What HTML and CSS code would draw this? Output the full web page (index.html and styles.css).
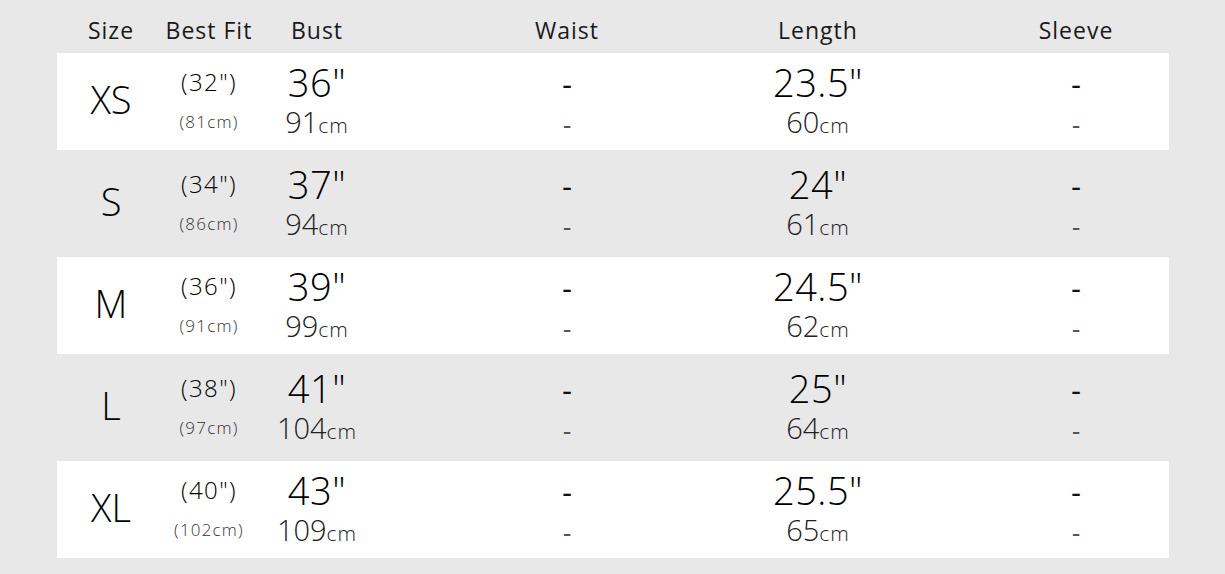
FILE: index.html
```html
<!DOCTYPE html>
<html>
<head>
<meta charset="utf-8">
<link rel="stylesheet" href="styles.css">
</head>
<body>
<div class="chart">
  <div class="row head">
    <div class="c c1">Size</div>
    <div class="c c2">Best Fit</div>
    <div class="c c3">Bust</div>
    <div class="c c4">Waist</div>
    <div class="c c5">Length</div>
    <div class="c c6">Sleeve</div>
  </div>

  <div class="row white">
    <div class="c c1 size">XS</div>
    <div class="c c2 pair"><span class="fi">(32")</span><span class="fc">(81cm)</span></div>
    <div class="c c3 pair"><span class="in">36"</span><span class="cmv">91<small>cm</small></span></div>
    <div class="c c4 pair"><span class="dash">-</span><span class="dash2">-</span></div>
    <div class="c c5 pair"><span class="in">23.5"</span><span class="cmv">60<small>cm</small></span></div>
    <div class="c c6 pair"><span class="dash">-</span><span class="dash2">-</span></div>
  </div>

  <div class="row">
    <div class="c c1 size">S</div>
    <div class="c c2 pair"><span class="fi">(34")</span><span class="fc">(86cm)</span></div>
    <div class="c c3 pair"><span class="in">37"</span><span class="cmv">94<small>cm</small></span></div>
    <div class="c c4 pair"><span class="dash">-</span><span class="dash2">-</span></div>
    <div class="c c5 pair"><span class="in">24"</span><span class="cmv">61<small>cm</small></span></div>
    <div class="c c6 pair"><span class="dash">-</span><span class="dash2">-</span></div>
  </div>

  <div class="row white">
    <div class="c c1 size">M</div>
    <div class="c c2 pair"><span class="fi">(36")</span><span class="fc">(91cm)</span></div>
    <div class="c c3 pair"><span class="in">39"</span><span class="cmv">99<small>cm</small></span></div>
    <div class="c c4 pair"><span class="dash">-</span><span class="dash2">-</span></div>
    <div class="c c5 pair"><span class="in">24.5"</span><span class="cmv">62<small>cm</small></span></div>
    <div class="c c6 pair"><span class="dash">-</span><span class="dash2">-</span></div>
  </div>

  <div class="row">
    <div class="c c1 size">L</div>
    <div class="c c2 pair"><span class="fi">(38")</span><span class="fc">(97cm)</span></div>
    <div class="c c3 pair"><span class="in">41"</span><span class="cmv">104<small>cm</small></span></div>
    <div class="c c4 pair"><span class="dash">-</span><span class="dash2">-</span></div>
    <div class="c c5 pair"><span class="in">25"</span><span class="cmv">64<small>cm</small></span></div>
    <div class="c c6 pair"><span class="dash">-</span><span class="dash2">-</span></div>
  </div>

  <div class="row white">
    <div class="c c1 size">XL</div>
    <div class="c c2 pair"><span class="fi">(40")</span><span class="fc">(102cm)</span></div>
    <div class="c c3 pair"><span class="in">43"</span><span class="cmv">109<small>cm</small></span></div>
    <div class="c c4 pair"><span class="dash">-</span><span class="dash2">-</span></div>
    <div class="c c5 pair"><span class="in">25.5"</span><span class="cmv">65<small>cm</small></span></div>
    <div class="c c6 pair"><span class="dash">-</span><span class="dash2">-</span></div>
  </div>
</div>
</body>
</html>
```

FILE: styles.css
```css
html, body {
  margin: 0;
  padding: 0;
  background: #e8e8e8;
}
body {
  font-family: "Open Sans", "DejaVu Sans", sans-serif;
  font-weight: 400;
  color: #111;
}
.chart {
  width: 1112px;
  margin-left: 57px;
}
.row {
  display: grid;
  grid-template-columns: 108px 88px 128px 372px 130px 286px;
  height: 97px;
  margin-bottom: 5px;
}
.row.white {
  background: #fff;
}
.row.head {
  height: 53px;
  margin-bottom: 0;
}
.c {
  text-align: center;
  white-space: nowrap;
}
.c6 {
  padding-left: 100px;
}
.head .c {
  font-size: 23px;
  font-weight: 400;
  line-height: 24px;
  padding-top: 18px;
  letter-spacing: 1px;
  color: #1a1a1a;
}
.size {
  font-size: 38px;
  font-weight: 300;
  line-height: 92px;
  color: #000;
}
.pair {
  display: flex;
  flex-direction: column;
  align-items: center;
  padding-top: 7px;
}
.pair > span {
  display: block;
}
.pair > span:first-child {
  height: 44px;
  line-height: 44px;
}
.pair > span:last-child {
  height: 36px;
  line-height: 36px;
}
.fi {
  font-size: 24px;
  font-weight: 300;
  letter-spacing: 1.4px;
  color: #000;
}
.fc {
  font-size: 17px;
  font-weight: 300;
  letter-spacing: 1.2px;
  color: #333;
}
.in {
  font-size: 38px;
  font-weight: 300;
  letter-spacing: 0.5px;
  color: #000;
}
.cmv {
  font-size: 29px;
  font-weight: 300;
  color: #222;
}
.cmv small {
  font-size: 21px;
  letter-spacing: 1px;
}
.dash {
  font-family: "DejaVu Sans", sans-serif;
  font-weight: 400;
  font-size: 28px;
  padding-top: 4px;
  color: #111;
}
.dash2 {
  font-family: "DejaVu Sans", sans-serif;
  font-weight: 400;
  font-size: 24px;
  color: #555;
}
```
